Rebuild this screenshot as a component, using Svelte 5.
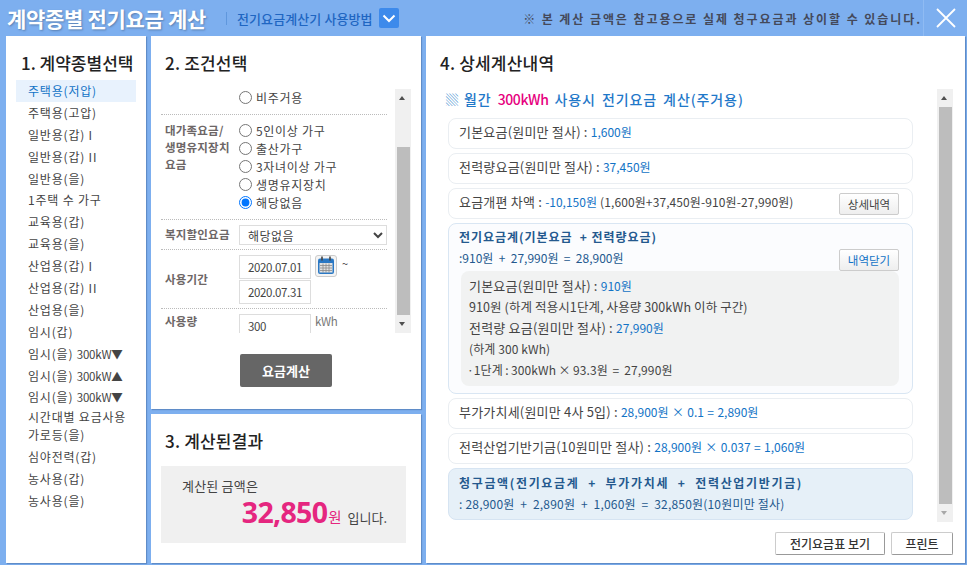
<script>
  let contract = $state('주택용(저압)');
  let family = $state('해당없음');

  const contracts = [
    '주택용(저압)', '주택용(고압)', '일반용(갑) I', '일반용(갑) II', '일반용(을)', '1주택 수 가구',
    '교육용(갑)', '교육용(을)', '산업용(갑) I', '산업용(갑) II', '산업용(을)', '임시(갑)'
  ];
  const temporary = ['300kW▼', '300kW▲', '300kW▼'];
  const contractsTail = ['심야전력(갑)', '농사용(갑)', '농사용(을)'];
  const families = ['5인이상 가구', '출산가구', '3자녀이상 가구', '생명유지장치', '해당없음'];
</script>

<div class="page">
  <header class="top">
    <h1>계약종별 전기요금 계산</h1>
    <span class="divider"></span>
    <a class="howto" href="#howto">전기요금계산기 사용방법</a>
    <button class="toggle" aria-label="사용방법 열기">
      <svg width="14" height="9" viewBox="0 0 14 9"><path d="M1.5 1.5 7 7l5.5-5.5" fill="none" stroke="#fff" stroke-width="2"/></svg>
    </button>
    <p class="notice">※ 본 계산 금액은 참고용으로 실제 청구요금과 상이할 수 있습니다.</p>
    <button class="close" aria-label="닫기">
      <svg width="20" height="20" viewBox="0 0 20 20"><path d="M1 1l18 18M19 1 1 19" stroke="#fff" stroke-width="1.8"/></svg>
    </button>
  </header>

  <main class="columns">
    <section class="panel types">
      <h2>1. 계약종별선택</h2>
      <ul>
        {#each contracts as item}
          <li class:active={item === contract}>{item}</li>
        {/each}
        {#each temporary as item}
          <li>임시(을) <span class="kw">{item}</span></li>
        {/each}
        <li class="short">시간대별 요금사용</li>
        <li class="short">가로등(을)</li>
        {#each contractsTail as item}
          <li>{item}</li>
        {/each}
      </ul>
    </section>

    <div class="middle">
      <section class="panel conditions">
        <h2>2. 조건선택</h2>
        <div class="scrollbox">
          <div class="form">
            <div class="row first">
              <span class="label"></span>
              <label class="radio"><input type="radio" name="house" />비주거용</label>
            </div>
            <div class="row family">
              <span class="label">대가족요금/<br />생명유지장치<br />요금</span>
              <div class="radios">
                {#each families as item}
                  <label class="radio"><input type="radio" name="family" value={item} bind:group={family} />{item}</label>
                {/each}
              </div>
            </div>
            <div class="row welfare">
              <span class="label">복지할인요금</span>
              <select><option>해당없음</option></select>
            </div>
            <div class="row period">
              <span class="label">사용기간</span>
              <div class="dates">
                <input class="text" value="2020.07.01" />
                <button class="cal" aria-label="달력">
                  <svg width="18" height="19" viewBox="0 0 18 19">
                    <rect x="1" y="2.5" width="16" height="15.5" rx="2" fill="#2a78c4"/>
                    <rect x="2.5" y="7" width="13" height="9.5" fill="#e2e2e2"/>
                    <path d="M3 9.500h12M3 12h12M3 14.500h12M6 7.500v9M9 7.500v9M12 7.500v9" stroke="#8a8a8a" stroke-width=".8"/>
                    <path d="M5 .5v4M13 .5v4" stroke="#444" stroke-width="1.600"/>
                  </svg>
                </button>
                <span class="tilde">~</span>
                <input class="text" value="2020.07.31" />
              </div>
            </div>
            <div class="row usage">
              <span class="label">사용량</span>
              <input class="text" value="300" />
              <span class="unit">kWh</span>
            </div>
          </div>
          <div class="scrollbar">
            <span class="arrow up"></span>
            <span class="gap-top"></span>
            <span class="thumb"></span>
            <span class="arrow down"></span>
          </div>
        </div>
        <button class="calc">요금계산</button>
      </section>

      <section class="panel result">
        <h2>3. 계산된결과</h2>
        <div class="amount">
          <p class="caption">계산된 금액은</p>
          <p class="total"><strong>32,850</strong><em>원</em> 입니다.</p>
        </div>
      </section>
    </div>

    <section class="panel detail">
      <h2>4. 상세계산내역</h2>
      <div class="detail-scroll">
        <div class="detail-body">
          <h3><span class="mark">▒</span> 월간 <b>300kWh</b> 사용시 전기요금 계산(주거용)</h3>
          <div class="line">기본요금(원미만 절사) : <span class="val">1,600원</span></div>
          <div class="line">전력량요금(원미만 절사) : <span class="val">37,450원</span></div>
          <div class="line spread">
            <span class="spread-text">요금개편 차액 : <span class="val">-10,150원</span> <span class="num">(1,600원+37,450원-910원-27,990원)</span></span>
            <button class="small">상세내역</button>
          </div>
          <div class="line bill">
            <div class="bill-head">
              <div>
                <strong>전기요금계(기본요금 &nbsp;+ 전력량요금)</strong>
                <p>:910원 &nbsp;+ &nbsp;27,990원 &nbsp;= &nbsp;28,900원</p>
              </div>
              <button class="small blue">내역닫기</button>
            </div>
            <div class="inner">
              <p>기본요금(원미만 절사) : <span class="val">910원</span></p>
              <p class="mixed">910원 (하계 적용시1단계, 사용량 300kWh 이하 구간)</p>
              <p>전력량 요금(원미만 절사) : <span class="val">27,990원</span></p>
              <p class="num">(하계 300 kWh)</p>
              <p class="num tight">·1단계 : 300kWh × 93.3원 &nbsp;= &nbsp;27,990원</p>
            </div>
          </div>
          <div class="line">부가가치세(원미만 4사 5입) : <span class="val sum">28,900원 &nbsp;× &nbsp;0.1 &nbsp;= &nbsp;2,890원</span></div>
          <div class="line">전력산업기반기금(10원미만 절사) : <span class="val sum">28,900원 &nbsp;× &nbsp;0.037 &nbsp;= &nbsp;1,060원</span></div>
          <div class="line final">
            <strong>청구금액(전기요금계 &nbsp;+ &nbsp;부가가치세 &nbsp;+ &nbsp;전력산업기반기금)</strong>
            <p>: 28,900원 &nbsp;+ &nbsp;2,890원 &nbsp;+ &nbsp;1,060원 &nbsp;= &nbsp;32,850원(10원미만 절사)</p>
          </div>
        </div>
        <div class="scrollbar">
          <span class="arrow up"></span>
          <span class="thumb"></span>
          <span class="arrow down pale"></span>
        </div>
      </div>
      <div class="actions">
        <button class="plain wide">전기요금표 보기</button>
        <button class="plain">프린트</button>
      </div>
    </section>
  </main>
</div>

<style>
  :global(body) {
    margin: 0;
    background: #7dafef;
  }
  .page {
    width: 967px;
    height: 565px;
    overflow: hidden;
    display: flex;
    flex-direction: column;
    font-family: "Noto Sans CJK KR", "Noto Sans", sans-serif;
    font-size: 12px;
    color: #444;
  }
  p, h1, h2, h3, ul {
    margin: 0;
    padding: 0;
  }
  button {
    font-family: inherit;
  }

  /* header */
  .top {
    height: 36px;
    flex: none;
    display: flex;
    align-items: center;
    padding-left: 7px;
  }
  h1 {
    font-size: 21px;
    font-weight: 700;
    color: #fff;
    letter-spacing: -0.3px;
    text-shadow: 1px 1px 2px #5a7fb0;
    width: 219px;
    white-space: nowrap;
  }
  .divider {
    width: 1px;
    height: 13px;
    background: #5f97dd;
    margin-right: 10px;
  }
  .howto {
    font-size: 13px;
    font-weight: 500;
    color: #1f66c2;
    text-decoration: none;
    letter-spacing: 0.1px;
    width: 142px;
    white-space: nowrap;
  }
  .toggle {
    width: 20px;
    height: 20px;
    padding: 0;
    border: 0;
    border-radius: 2px;
    background: #3d8aeb;
    display: flex;
    align-items: center;
    justify-content: center;
  }
  .notice {
    margin-left: auto;
    padding-right: 1px;
    font-size: 12px;
    font-weight: 700;
    color: #44495a;
    letter-spacing: 1.93px;
    white-space: nowrap;
  }
  .close {
    width: 44px;
    height: 36px;
    padding: 0;
    border: 0;
    border-left: 1px solid #8fbbf3;
    background: none;
    display: flex;
    align-items: center;
    justify-content: center;
  }

  /* columns */
  .columns {
    flex: 1;
    min-height: 0;
    display: flex;
    gap: 5px;
    padding: 0 2px 2px 6px;
  }
  .panel {
    background: #fff;
    box-shadow: 1px 1px 1px #5f8cc8;
    box-sizing: border-box;
  }
  h2 {
    font-size: 17px;
    font-weight: 500;
    color: #222;
    line-height: 24px;
    letter-spacing: 0.2px;
  }

  /* 1 */
  .types {
    width: 140px;
    padding: 15px 10px 0;
  }
  .types h2 {
    padding-left: 5px;
    white-space: nowrap;
    letter-spacing: 0;
  }
  .types ul {
    list-style: none;
    margin-top: 5px;
  }
  .types li {
    height: 21.900px;
    line-height: 21.900px;
    padding-left: 12px;
    width: 120px;
    box-sizing: border-box;
    color: #444;
    white-space: nowrap;
    letter-spacing: 0.8px;
  }
  .types li.short {
    height: 18px;
    line-height: 18px;
  }
  .types li.short + li.short {
    margin-bottom: 2px;
  }
  .types li.active {
    background: #e8f2fd;
    color: #1273c6;
  }
  .kw {
    font-size: 11.5px;
    letter-spacing: -0.2px;
  }

  /* 2 + 3 */
  .middle {
    width: 270px;
    display: flex;
    flex-direction: column;
    gap: 5px;
  }
  .conditions {
    height: 373px;
    padding: 15px 10px 0;
    flex: none;
  }
  .conditions h2, .result h2 {
    padding-left: 4px;
  }
  .scrollbox {
    margin-top: 14px;
    height: 244px;
    display: flex;
    overflow: hidden;
  }
  .form {
    width: 226px;
    flex: none;
  }
  .row {
    display: flex;
    align-items: center;
    padding-left: 4px;
    border-bottom: 1px dotted #bbb;
    box-sizing: border-box;
  }
  .label {
    width: 74px;
    flex: none;
    font-size: 11.5px;
    font-weight: 700;
    color: #6d6666;
    line-height: 17px;
    letter-spacing: 0.2px;
    white-space: nowrap;
  }
  .row.first {
    height: 26px;
    padding-bottom: 8px;
  }
  .row.family {
    height: 105px;
    align-items: flex-start;
    padding-top: 6px;
  }
  .row.family .label {
    padding-top: 1px;
  }
  .row.welfare {
    height: 30px;
  }
  .row.period {
    height: 59px;
  }
  .row.usage {
    border-bottom: 0;
    height: 40px;
    align-items: flex-start;
    padding-top: 4px;
  }
  .radios {
    display: flex;
    flex-direction: column;
  }
  .radio {
    display: flex;
    align-items: center;
    height: 18px;
    gap: 4px;
    color: #444;
    white-space: nowrap;
    letter-spacing: 0.7px;
  }
  .radio input {
    width: 13px;
    height: 13px;
    margin: 0;
  }
  select {
    width: 148px;
    height: 20px;
    padding: 0 0 0 4px;
    border: 1px solid #ddd;
    background: #fff;
    font: inherit;
    color: #444;
    border-radius: 0;
    letter-spacing: 0.5px;
  }
  .text {
    width: 72px;
    height: 24px;
    box-sizing: border-box;
    border: 1px solid #ddd;
    font: inherit;
    font-size: 11.5px;
    letter-spacing: -0.35px;
    color: #444;
    padding: 0;
    text-indent: 8px;
    flex: none;
  }
  .dates {
    display: grid;
    grid-template-columns: 72px 22px 14px;
    column-gap: 4px;
    row-gap: 1px;
    align-items: start;
  }
  .cal {
    width: 22px;
    height: 22px;
    padding: 0;
    border: 1px solid #ccc;
    border-radius: 3px;
    background: #f4f4f4;
    display: flex;
    align-items: center;
    justify-content: center;
  }
  .tilde {
    font-size: 11px;
    line-height: 16px;
    margin-left: 1px;
  }
  .dates .text:last-child {
    grid-column: 1;
  }
  .usage .text {
    margin-top: 1px;
  }
  .unit {
    margin-left: 4px;
    font-size: 11.5px;
    line-height: 16px;
    color: #777;
    letter-spacing: -0.3px;
  }

  /* fake scrollbars, both panels are clipped in the reference */
  .scrollbar {
    width: 16px;
    flex: none;
    margin-left: auto;
    background: #f0f0f0;
    display: flex;
    flex-direction: column;
    align-items: center;
  }
  .arrow {
    height: 18px;
    width: 100%;
    flex: none;
    position: relative;
  }
  .arrow::after {
    content: "";
    position: absolute;
    left: 4px;
    width: 0;
    height: 0;
    border-left: 3.500px solid transparent;
    border-right: 3.500px solid transparent;
  }
  .arrow.up::after {
    top: 7px;
    border-bottom: 4px solid #505050;
  }
  .arrow.down::after {
    bottom: 7px;
    border-top: 4px solid #505050;
  }
  .arrow.down.pale::after {
    border-top-color: #a8a8a8;
  }
  .gap-top {
    height: 40px;
    flex: none;
  }
  .thumb {
    width: 13px;
    flex: 1;
    background: #bdbdbd;
  }
  .calc {
    display: block;
    width: 92px;
    height: 33px;
    margin: 21px 0 0 79px;
    border: 0;
    border-radius: 2px;
    background: #666;
    color: #fff;
    font-size: 13px;
    font-weight: 700;
  }
  .result {
    flex: 1;
    padding: 15px 15px 0 10px;
  }
  .amount {
    margin-top: 13px;
    height: 77px;
    background: #f0f0f0;
    padding: 11px 19px 0 21px;
    box-sizing: border-box;
    width: 245px;
  }
  .caption {
    font-size: 13px;
    line-height: 18px;
    letter-spacing: 0.2px;
  }
  .total {
    text-align: right;
    font-size: 13px;
    line-height: 36px;
    margin-top: -1px;
    white-space: nowrap;
  }
  .total strong {
    font-family: "Open Sans", "Noto Sans", sans-serif;
    font-size: 28.500px;
    font-weight: 700;
    color: #e5267f;
    letter-spacing: -0.7px;
  }
  .total em {
    font-style: normal;
    font-size: 14.500px;
    color: #e5267f;
    margin: 0 3px 0 1px;
  }

  /* 4 */
  .detail {
    width: 539px;
    padding: 15px 12px 0 14px;
  }
  .detail-scroll {
    margin-top: 14px;
    height: 433px;
    display: flex;
  }
  .detail-body {
    width: 473px;
    flex: none;
  }
  h3 {
    font-size: 14px;
    font-weight: 500;
    color: #1f78c9;
    line-height: 22px;
    padding-left: 6px;
    margin-bottom: 7px;
    margin-top: -1px;
    white-space: nowrap;
    letter-spacing: 0.9px;
    word-spacing: 2px;
  }
  h3 b {
    font-weight: 500;
    color: #e6007e;
    letter-spacing: -0.4px;
  }
  .mark {
    font-size: 12px;
    letter-spacing: 0;
    color: #1878c8;
  }
  .line {
    margin: 0 0 4px 8px;
    width: 465px;
    box-sizing: border-box;
    height: 31px;
    border: 1px solid #eaeef2;
    border-radius: 8px;
    padding: 0 10px;
    font-size: 13px;
    line-height: 26px;
    color: #444;
    white-space: nowrap;
    letter-spacing: 0.2px;
  }
  .val, .num {
    font-size: 12px;
    letter-spacing: 0;
  }
  .val {
    color: #1273c6;
  }
  .num {
    letter-spacing: 0.1px;
  }
  .sum {
    word-spacing: -1px;
  }
  .spread {
    display: flex;
    justify-content: space-between;
    align-items: center;
    padding-right: 13px;
  }
  .spread-text {
    align-self: flex-start;
  }
  .small {
    width: 60px;
    height: 22px;
    padding: 0;
    border: 1px solid #ccc;
    border-radius: 2px;
    background: linear-gradient(#fff, #eee);
    font-size: 11.5px;
    color: #444;
  }
  .small.blue {
    color: #1273c6;
    margin-bottom: -3px;
  }
  .bill {
    background: #fbfcfe;
    border-color: #d9e6f3;
    height: 171px;
    padding: 2px 13px 0 10px;
    line-height: 21px;
    font-size: 12px;
    letter-spacing: 0;
  }
  .bill strong, .final strong {
    font-weight: 700;
  }
  .bill strong {
    letter-spacing: 0.95px;
  }
  .bill-head {
    display: flex;
    justify-content: space-between;
    align-items: flex-end;
    color: #24598e;
  }
  .inner {
    margin: 3px 0 0 2px;
    height: 115px;
    background: #f1f2f2;
    border-radius: 8px;
    padding: 4px 8px;
    box-sizing: border-box;
    color: #444;
    font-size: 13px;
    letter-spacing: 0.2px;
  }
  .inner p {
    height: 21px;
    line-height: 21px;
  }
  .inner .mixed {
    font-size: 12.500px;
    letter-spacing: 0.1px;
  }
  .inner .tight {
    word-spacing: -0.4px;
    margin-left: -2px;
  }
  .final {
    background: #e6f0f8;
    border-color: #d6e4f2;
    height: 52px;
    padding: 3px 10px 0;
    line-height: 21px;
    font-size: 12px;
    color: #24598e;
    margin-bottom: 0;
    letter-spacing: 0;
  }
  .final strong {
    letter-spacing: 1.65px;
  }
  .final p {
    letter-spacing: 0.2px;
  }
  .actions {
    margin-top: 10px;
    display: flex;
    justify-content: flex-end;
    gap: 6px;
  }
  .plain {
    width: 62px;
    height: 23px;
    padding: 0;
    background: #fff;
    border: 1px solid #ccc;
    border-right-color: #999;
    border-bottom-color: #999;
    border-radius: 2px;
    font-size: 12px;
    font-weight: 500;
    color: #333;
  }
  .plain.wide {
    width: 110px;
  }
</style>
